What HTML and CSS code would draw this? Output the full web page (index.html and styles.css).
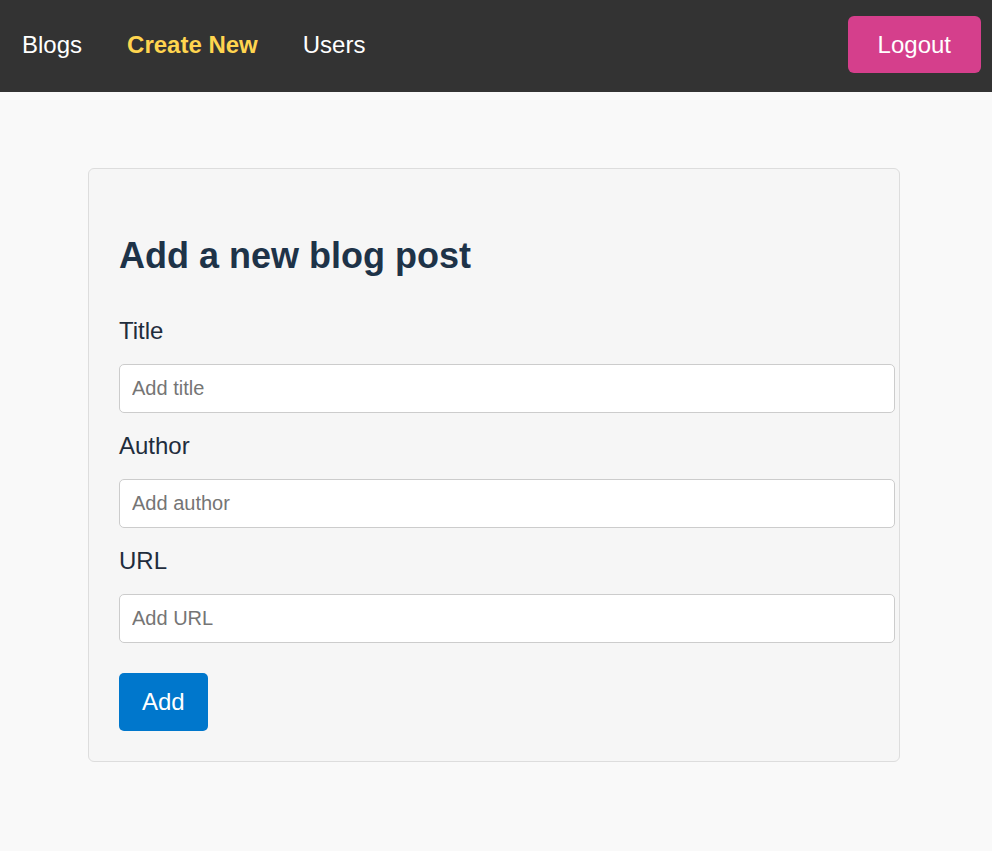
FILE: index.html
```html
<!DOCTYPE html>
<html lang="en">
<head>
<meta charset="utf-8">
<title>Blogs</title>
<link rel="stylesheet" href="styles.css">
</head>
<body>
<nav class="navbar">
  <div class="nav-links">
    <a class="nav-link" href="#">Blogs</a>
    <a class="nav-link active" href="#">Create New</a>
    <a class="nav-link" href="#">Users</a>
  </div>
  <button class="logout-btn" type="button">Logout</button>
</nav>
<main class="main">
  <section class="card">
    <h2 class="card-title">Add a new blog post</h2>
    <form class="blog-form">
      <label class="form-label" for="title">Title</label>
      <input class="form-input" id="title" type="text" placeholder="Add title">
      <label class="form-label" for="author">Author</label>
      <input class="form-input" id="author" type="text" placeholder="Add author">
      <label class="form-label" for="url">URL</label>
      <input class="form-input" id="url" type="text" placeholder="Add URL">
      <button class="add-btn" type="submit">Add</button>
    </form>
  </section>
</main>
</body>
</html>
```
FILE: styles.css
```css
* {
  box-sizing: border-box;
}

html, body {
  margin: 0;
  padding: 0;
}

body {
  background: #f9f9f9;
  font-family: "Liberation Sans", Arial, sans-serif;
  min-height: 851px;
}

.navbar {
  display: flex;
  align-items: center;
  justify-content: space-between;
  background: #333333;
  height: 92px;
  padding: 16px 11px 19px 22px;
}

.nav-links {
  display: flex;
  align-items: center;
  gap: 45px;
}

.nav-link {
  color: #ffffff;
  text-decoration: none;
  font-size: 24px;
  line-height: 28px;
}

.nav-link.active {
  color: #ffd54f;
  font-weight: bold;
}

.logout-btn {
  background: #d53f8c;
  color: #ffffff;
  border: none;
  border-radius: 6px;
  font-family: inherit;
  font-size: 24px;
  line-height: 27px;
  padding: 15px 30px;
  cursor: pointer;
}

.main {
  padding: 76px 0 0 88px;
}

.card {
  width: 812px;
  background: #f6f6f6;
  border: 1px solid #dddddd;
  border-radius: 6px;
  padding: 30px 30px 30px 30px;
}

.card-title {
  margin: 36px 0 41px 0;
  font-size: 36px;
  line-height: 41px;
  font-weight: bold;
  color: #1e3348;
}

.blog-form {
  display: flex;
  flex-direction: column;
  align-items: flex-start;
}

.form-label {
  display: block;
  font-size: 24px;
  line-height: 28px;
  color: #1f2d3d;
  margin-bottom: 19px;
}

.form-input {
  display: block;
  box-sizing: content-box;
  width: 100%;
  height: 25px;
  padding: 11px 12px;
  margin: 0 0 19px 0;
  border: 1px solid #cccccc;
  border-radius: 5px;
  background: #ffffff;
  font-family: inherit;
  font-size: 20px;
  line-height: 25px;
  color: #222222;
}

.form-input::placeholder {
  color: #757575;
}

.add-btn {
  margin-top: 11px;
  background: #0077cc;
  color: #ffffff;
  border: none;
  border-radius: 5px;
  font-family: inherit;
  font-size: 24px;
  line-height: 28px;
  padding: 15px 23px;
  cursor: pointer;
}
```
